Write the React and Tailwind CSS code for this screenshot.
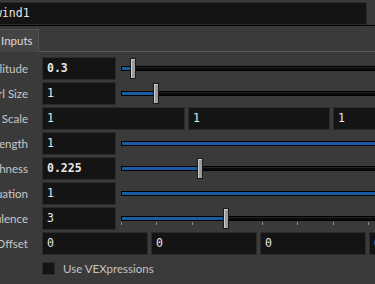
import React from "react";

const sans = { fontFamily: "Lato, 'Noto Sans', sans-serif" };
const mono = { fontFamily: "'DejaVu Sans Mono', 'Liberation Mono', monospace" };

function Field({ value, bold, w }) {
  return (
    <div
      className={`h-[23px] shrink-0 bg-[#141414] border border-[#2b2b2b] flex items-center pl-[4px] text-[11.5px] text-[#e6e6e6] ${w}`}
      style={mono}
    >
      <span className={bold ? "font-bold" : ""}>{value}</span>
    </div>
  );
}

function Slider({ pos, full, ticks }) {
  return (
    <div className="relative ml-[5px] flex-1 h-[25px]">
      <div className="absolute left-0 right-[-40px] top-[10px] h-[5px] bg-black p-[1px]">
        <div className="h-[3px] w-full bg-[#0b0b0b] border-t border-[#222]" />
        <div
          className="absolute left-[1px] top-[1px] h-[3px] bg-[#1b5ba6]"
          style={{ width: full ? "100%" : pos - 1 }}
        />
      </div>
      {ticks && (
        <div className="absolute left-0 top-[16px] flex">
          {[0, 1, 2, 3, 4, 5, 6, 7].map((i) => (
            <div key={i} className="w-[35.3px] shrink-0">
              <div className="w-px h-[3px] bg-[#8a8a8a]" />
            </div>
          ))}
        </div>
      )}
      {!full && (
        <div
          className="absolute top-[2px] w-[6px] h-[21px] bg-[#9c9c9c] border border-[#1a1a1a] shadow-[inset_1px_1px_0_#cdcdcd]"
          style={{ left: pos }}
        />
      )}
    </div>
  );
}

function Row({ label, children }) {
  return (
    <div className="flex items-center h-[25px]">
      <div
        className="w-[102px] shrink-0 text-right pr-[14px] text-[11.5px] text-[#c8c8c8] whitespace-nowrap overflow-hidden"
        style={sans}
      >
        {label}
      </div>
      {children}
    </div>
  );
}

export default function App() {
  return (
    <div className="w-[375px] h-[284px] overflow-hidden bg-[#3a3a3a] relative">
      {/* name field */}
      <div className="pt-[2px] pr-[8px] -ml-[8px] h-[25px]">
        <div
          className="h-[23px] bg-[#141414] border border-[#2b2b2b] flex items-center pl-[2px] text-[11.5px] text-[#e6e6e6]"
          style={mono}
        >
          wind1
        </div>
      </div>
      <div className="h-px bg-black" />
      {/* tabs */}
      <div className="h-[26px] flex items-end">
        <div
          className="-ml-[5px] h-[23px] w-[44px] bg-[#444] border-t border-r border-[#555] flex items-center pl-[6px] text-[11.5px] text-[#dcdcdc]"
          style={sans}
        >
          Inputs
        </div>
        <div className="flex-1 h-px bg-[#565656]" />
      </div>
      {/* params */}
      <div className="-ml-[60px] pt-[4px]">
        <Row label="Amplitude">
          <Field value="0.3" bold w="w-[74px]" />
          <Slider pos={9} />
        </Row>
        <Row label="Swirl Size">
          <Field value="1" w="w-[74px]" />
          <Slider pos={32} />
        </Row>
        <Row label="Grain Scale">
          <div className="flex gap-[3px] overflow-hidden flex-1">
            <Field value="1" w="w-[143px]" />
            <Field value="1" w="w-[142px]" />
            <Field value="1" w="w-[142px]" />
          </div>
        </Row>
        <Row label="Pulse Length">
          <Field value="1" w="w-[74px]" />
          <Slider full />
        </Row>
        <Row label="Roughness">
          <Field value="0.225" bold w="w-[74px]" />
          <Slider pos={76} />
        </Row>
        <Row label="Attenuation">
          <Field value="1" w="w-[74px]" />
          <Slider full />
        </Row>
        <Row label="Turbulence">
          <Field value="3" w="w-[74px]" />
          <Slider pos={102} ticks />
        </Row>
        <Row label="Offset">
          <div className="flex gap-[3px] overflow-hidden flex-1">
            <Field value="0" w="w-[106px]" />
            <Field value="0" w="w-[106px]" />
            <Field value="0" w="w-[106px]" />
            <Field value="0" w="w-[106px]" />
          </div>
        </Row>
        <div className="flex items-center h-[25px] pl-[102px]">
          <div className="w-[13px] h-[13px] bg-[#141414] border border-[#2b2b2b]" />
          <span className="ml-[8px] text-[11.5px] text-[#c4c4c4]" style={sans}>
            Use VEXpressions
          </span>
        </div>
      </div>
    </div>
  );
}
